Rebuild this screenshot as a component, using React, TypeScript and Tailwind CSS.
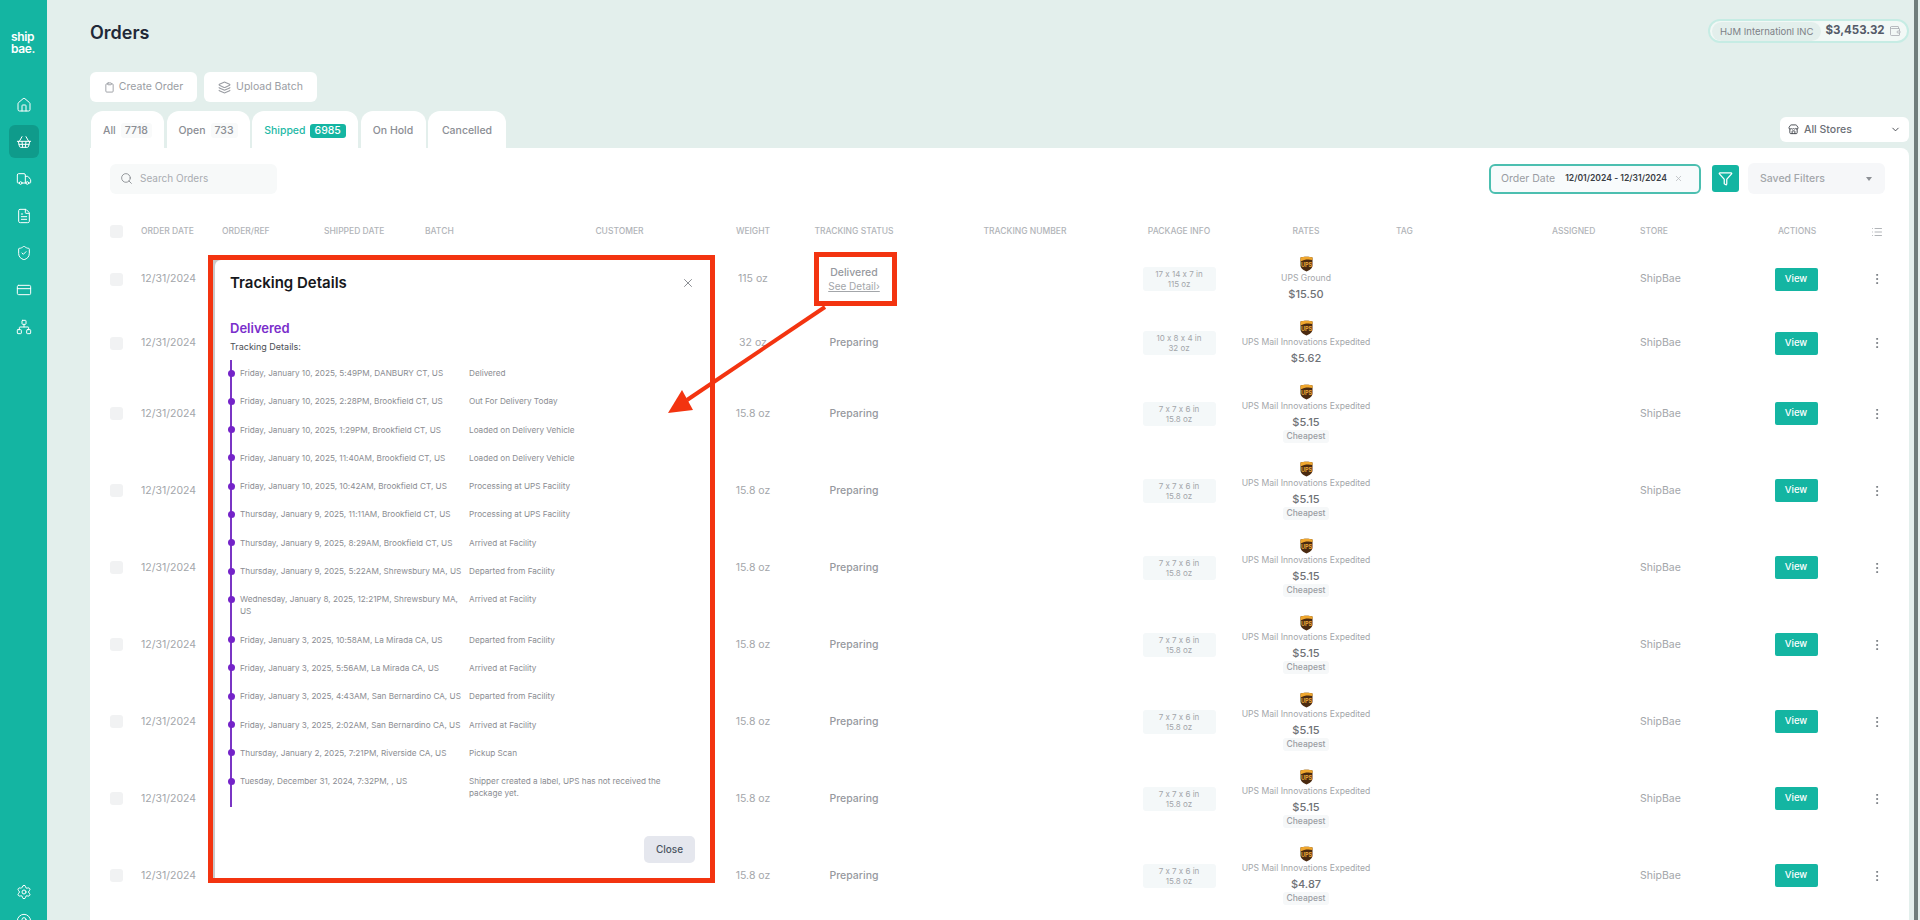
import { ChevronDown, CreditCard, FileText, Filter, Home, Layers, List, MoreVertical, Network, Search, Settings, ShieldCheck, ShoppingBasket, Store, Truck, Wallet, X, Clipboard, CircleUser } from "lucide-react"

const gridCols =
  "grid grid-cols-[31px_81px_102px_101px_101px_187px_80px_122px_220px_88px_166px_163px_88px_100px_114px_46px] items-center"

const navIcons = [Home, ShoppingBasket, Truck, FileText, ShieldCheck, CreditCard, Network]

const rows = [
  { weight: "115 oz", status: "Delivered", size: "17 x 14 x 7 in", service: "UPS Ground", price: "$15.50", cheapest: false },
  { weight: "32 oz", status: "Preparing", size: "10 x 8 x 4 in", service: "UPS Mail Innovations Expedited", price: "$5.62", cheapest: false },
  { weight: "15.8 oz", status: "Preparing", size: "7 x 7 x 6 in", service: "UPS Mail Innovations Expedited", price: "$5.15", cheapest: true },
  { weight: "15.8 oz", status: "Preparing", size: "7 x 7 x 6 in", service: "UPS Mail Innovations Expedited", price: "$5.15", cheapest: true },
  { weight: "15.8 oz", status: "Preparing", size: "7 x 7 x 6 in", service: "UPS Mail Innovations Expedited", price: "$5.15", cheapest: true },
  { weight: "15.8 oz", status: "Preparing", size: "7 x 7 x 6 in", service: "UPS Mail Innovations Expedited", price: "$5.15", cheapest: true },
  { weight: "15.8 oz", status: "Preparing", size: "7 x 7 x 6 in", service: "UPS Mail Innovations Expedited", price: "$5.15", cheapest: true },
  { weight: "15.8 oz", status: "Preparing", size: "7 x 7 x 6 in", service: "UPS Mail Innovations Expedited", price: "$5.15", cheapest: true },
  { weight: "15.8 oz", status: "Preparing", size: "7 x 7 x 6 in", service: "UPS Mail Innovations Expedited", price: "$4.87", cheapest: true },
]

const events = [
  ["Friday, January 10, 2025, 5:49PM, DANBURY CT, US", "Delivered"],
  ["Friday, January 10, 2025, 2:28PM, Brookfield CT, US", "Out For Delivery Today"],
  ["Friday, January 10, 2025, 1:29PM, Brookfield CT, US", "Loaded on Delivery Vehicle"],
  ["Friday, January 10, 2025, 11:40AM, Brookfield CT, US", "Loaded on Delivery Vehicle"],
  ["Friday, January 10, 2025, 10:42AM, Brookfield CT, US", "Processing at UPS Facility"],
  ["Thursday, January 9, 2025, 11:11AM, Brookfield CT, US", "Processing at UPS Facility"],
  ["Thursday, January 9, 2025, 8:29AM, Brookfield CT, US", "Arrived at Facility"],
  ["Thursday, January 9, 2025, 5:22AM, Shrewsbury MA, US", "Departed from Facility"],
  ["Wednesday, January 8, 2025, 12:21PM, Shrewsbury MA, US", "Arrived at Facility"],
  ["Friday, January 3, 2025, 10:58AM, La Mirada CA, US", "Departed from Facility"],
  ["Friday, January 3, 2025, 5:56AM, La Mirada CA, US", "Arrived at Facility"],
  ["Friday, January 3, 2025, 4:43AM, San Bernardino CA, US", "Departed from Facility"],
  ["Friday, January 3, 2025, 2:02AM, San Bernardino CA, US", "Arrived at Facility"],
  ["Thursday, January 2, 2025, 7:21PM, Riverside CA, US", "Pickup Scan"],
  ["Tuesday, December 31, 2024, 7:32PM, , US", "Shipper created a label, UPS has not received the package yet."],
]

function UpsLogo() {
  return (
    <svg width="13" height="16" viewBox="0 0 13 16" className="shrink-0">
      <path d="M0.5 1.6C3 0.5 10 0.5 12.5 1.6V9.5C12.5 12.6 9 14.4 6.5 15.5C4 14.4 0.5 12.6 0.5 9.5Z" fill="#4a2a10" />
      <path d="M0.5 1.6C3 0.5 10 0.5 12.5 1.6V4C9 3 4 3.2 0.5 5.5Z" fill="#f0a72e" />
      <text x="6.5" y="10.5" textAnchor="middle" fontSize="5.5" fontWeight="700" fill="#e9a73a" fontFamily="Inter, sans-serif">UPS</text>
    </svg>
  )
}

function Sidebar() {
  return (
    <aside className="w-[47px] shrink-0 bg-[#14b5a2] flex flex-col items-center text-white">
      <div className="mt-[31px] w-[25px] text-[12px] leading-[12px] font-semibold tracking-[-0.4px]">
        ship
        <br />
        bae.
      </div>
      <div className="mt-[31px] flex flex-col items-center">
        {navIcons.map((Icon, i) => (
          <div key={i} className="h-[37px] flex items-center justify-center">
            <div className={`w-[30px] h-[33px] flex items-center justify-center rounded-md ${i === 1 ? "bg-[#0f9b8b]" : ""}`}>
              <Icon size={16} strokeWidth={1.5} />
            </div>
          </div>
        ))}
      </div>
      <div className="mt-auto flex flex-col items-center gap-[13px] -mb-[9px]">
        <Settings size={16} strokeWidth={1.5} />
        <CircleUser size={16} strokeWidth={1.5} />
      </div>
    </aside>
  )
}

function Tab({ label, count, active, width }: { label: string; count?: string; active?: boolean; width: string }) {
  return (
    <div
      className={`${width} h-[37px] pt-[2px] rounded-t-xl bg-white flex items-center justify-center gap-[4px] text-[10.5px] font-medium ${
        active ? "text-[#1fb9a6]" : "text-[#8b8e94]"
      }`}
    >
      <span>{label}</span>
      {count && (
        <span
          className={
            active
              ? "h-[14px] px-[5px] rounded-[3px] bg-[#14b5a2] text-white flex items-center"
              : "ml-[1px] px-[4px] rounded-[3px] bg-[#f9fafa]"
          }
        >
          {count}
        </span>
      )}
    </div>
  )
}

function OrderRow({ row }: { row: (typeof rows)[number] }) {
  return (
    <div className={`${gridCols} py-[9px] text-[#a3a6aa] text-[10.5px]`}>
      <div className="w-[13px] h-[13px] rounded-[3px] bg-[#f1f2f3]" />
      <div>12/31/2024</div>
      <div />
      <div />
      <div />
      <div />
      <div className="text-center">{row.weight}</div>
      <div className="text-center font-medium text-[#96999e]">
        {row.status}
        {row.status === "Delivered" && (
          <div className="text-[10px] leading-[13px] font-normal underline text-[#a3a6aa]">See Detail›</div>
        )}
      </div>
      <div />
      <div className="flex justify-center">
        <div className="w-[73px] h-[24px] rounded-[3px] bg-[#f4f8f9] text-[8px] leading-[10px] text-center flex flex-col justify-center">
          <span>{row.size}</span>
          <span>{row.weight}</span>
        </div>
      </div>
      <div className="flex flex-col items-center">
        <UpsLogo />
        <div className="text-[8.6px] leading-[12px] whitespace-nowrap">{row.service}</div>
        <div className="mt-[2px] text-[11px] leading-[16px] font-medium text-[#6e7176]">{row.price}</div>
        {row.cheapest && (
          <div className="h-[13px] px-[4px] rounded-[3px] bg-[#f6f8f9] text-[8.5px] leading-[13px] font-medium text-[#9a9da3]">
            Cheapest
          </div>
        )}
      </div>
      <div />
      <div />
      <div>ShipBae</div>
      <div className="flex justify-center pr-[2px]">
        <button className="w-[43px] h-[23px] rounded-[2px] bg-[#14b5a2] text-white text-[9.5px] font-medium">View</button>
      </div>
      <div className="flex justify-center">
        <MoreVertical size={14} strokeWidth={1.5} className="text-[#6b7076]" />
      </div>
    </div>
  )
}

function TrackingModal() {
  return (
    <div className="absolute left-[208px] top-[255px] w-[507px] h-[628px] border-[5px] border-[#f33410] bg-[#c9c9c9] pl-[2px]">
      <div className="h-full rounded-tl-md bg-white pl-[15px] pr-[15px] pt-[8px]">
        <div className="flex items-center justify-between h-[30px]">
          <h2 className="text-[15px] font-semibold text-[#16181c]">Tracking Details</h2>
          <X size={14} strokeWidth={1.5} className="text-[#7b7f85]" />
        </div>
        <div className="mt-[22px] text-[13px] leading-[16px] font-semibold text-[#7a2ecb]">Delivered</div>
        <div className="mt-[4px] text-[9px] leading-[14px] text-[#4c4f55]">Tracking Details:</div>
        <div className="relative mt-[6px]">
          <div className="absolute left-0 top-0 bottom-0 w-[2px] bg-[#7a35c4]" />
          <ul className="pt-[7px] pb-[8px]">
            {events.map(([place, status], i) => (
              <li
                key={i}
                className={`relative grid grid-cols-[224px_226px] gap-x-[5px] pl-[10px] text-[8.2px] leading-[12px] text-[#8b8d92] ${
                  i === events.length - 1 ? "" : "pb-[16.3px]"
                }`}
              >
                <span className="absolute -left-[2.5px] top-[2.5px] w-[7px] h-[7px] rounded-full bg-[#7423c9]" />
                <span>{place}</span>
                <span>{status}</span>
              </li>
            ))}
          </ul>
        </div>
        <div className="mt-[29px] flex justify-end">
          <button className="w-[51px] h-[27px] rounded-[5px] bg-[#e5e7ee] text-[10px] font-medium text-[#4b5563]">Close</button>
        </div>
      </div>
    </div>
  )
}

export default function App() {
  return (
    <div className="relative flex h-[920px] overflow-hidden bg-[#e3efec] font-[Inter,sans-serif] [font-feature-settings:'calt'_0]">
      <Sidebar />
      <main className="flex-1 min-w-0 pl-[43px] pr-[11px] pt-[19px]">
        <div className="flex items-start justify-between">
          <h1 className="text-[18px] leading-[28px] font-semibold text-[#1f2937]">Orders</h1>
          <div className="w-[201px] h-[24px] rounded-full border-2 border-[#c6ece4] bg-[#f2f8f6] flex items-center pl-[2px] pr-[6px]">
            <div className="h-[19px] px-[8px] rounded-full bg-[#e3efec] text-[9.5px] leading-[19px] text-[#7d8187] whitespace-nowrap">
              HJM Internationl INC
            </div>
            <div className="ml-[4px] text-[11.5px] font-bold text-[#555a68]">$3,453.32</div>
            <Wallet size={12} strokeWidth={1.5} className="ml-auto text-[#a4a7ad]" />
          </div>
        </div>

        <div className="mt-[25px] flex gap-[7px]">
          <button className="w-[107px] h-[30px] rounded-md bg-white flex items-center justify-center gap-[4px] text-[10.5px] text-[#9a9da3]">
            <Clipboard size={11} /> Create Order
          </button>
          <button className="w-[113px] h-[30px] rounded-md bg-white flex items-center justify-center gap-[5px] text-[10.5px] text-[#9a9da3]">
            <Layers size={13} /> Upload Batch
          </button>
        </div>

        <div className="mt-[9px] flex items-start justify-between">
          <div className="flex gap-[2.5px] pl-[1px]">
            <Tab label="All" count="7718" width="w-[73px]" />
            <Tab label="Open" count="733" width="w-[83px]" />
            <Tab label="Shipped" count="6985" active width="w-[106px]" />
            <Tab label="On Hold" width="w-[65px]" />
            <Tab label="Cancelled" width="w-[78px]" />
          </div>
          <div className="mt-[6px] w-[129px] h-[25px] rounded-md bg-white flex items-center pl-[8px] pr-[8px] text-[10.5px] font-medium text-[#6b6f76]">
            <Store size={11} className="mr-[5px] text-[#3f4349]" />
            All Stores
            <ChevronDown size={11} className="ml-auto text-[#3f4349]" />
          </div>
        </div>

        <section className="h-[780px] rounded-tr-lg bg-white pl-[20px] pr-[9px] pt-[15px]">
          <div className="flex items-center justify-between h-[31px] pr-[15px]">
            <div className="w-[167px] h-[30px] rounded-md bg-[#f7f9f9] flex items-center pl-[10px] gap-[7px] text-[10px] text-[#a9acb1]">
              <Search size={13} strokeWidth={1.5} className="text-[#7f8388]" />
              Search Orders
            </div>
            <div className="flex items-center">
              <div className="w-[212px] h-[30px] rounded-md border-2 border-[#4cbfb0] bg-[#f8fbfc] flex items-center pl-[10px] text-[10.5px] text-[#9a9da3] whitespace-nowrap">
                Order Date
                <span className="ml-[10px] text-[8.6px] font-semibold text-[#3a3d44]">12/01/2024 - 12/31/2024</span>
                <X size={9} className="ml-auto mr-[16px] text-[#b5b8bc]" />
              </div>
              <div className="ml-[11px] w-[27px] h-[27px] rounded-[3px] bg-[#14b5a2] flex items-center justify-center text-white">
                <Filter size={15} strokeWidth={2} />
              </div>
              <div className="ml-[9px] w-[137px] h-[31px] rounded-md bg-[#f6f7f9] flex items-center pl-[12px] pr-[13px] text-[10.5px] font-medium text-[#a3a6aa]">
                Saved Filters
                <span className="ml-auto w-0 h-0 border-x-[3.5px] border-x-transparent border-t-[4px] border-t-[#8d9095]" />
              </div>
            </div>
          </div>

          <div className={`${gridCols} mt-[22px] h-[31px] text-[8.5px] font-medium text-[#b1b4b8]`}>
            <div className="w-[13px] h-[13px] rounded-[3px] bg-[#f1f2f3]" />
            <div>ORDER DATE</div>
            <div>ORDER/REF</div>
            <div>SHIPPED DATE</div>
            <div>BATCH</div>
            <div className="text-center">CUSTOMER</div>
            <div className="text-center">WEIGHT</div>
            <div className="text-center">TRACKING STATUS</div>
            <div className="text-center">TRACKING NUMBER</div>
            <div className="text-center">PACKAGE INFO</div>
            <div className="text-center">RATES</div>
            <div className="pl-[7px]">TAG</div>
            <div>ASSIGNED</div>
            <div>STORE</div>
            <div className="text-center">ACTIONS</div>
            <div className="flex justify-center">
              <List size={12} />
            </div>
          </div>

          {rows.map((row, i) => (
            <OrderRow key={i} row={row} />
          ))}
        </section>
      </main>

      <TrackingModal />

      {/* annotation around the tracking status cell */}
      <div className="absolute left-[814px] top-[252px] w-[83px] h-[54px] border-[5px] border-[#f33410]" />
      <svg className="absolute left-[660px] top-[300px]" width="170" height="120" viewBox="0 0 170 120">
        <line x1="165" y1="7" x2="27" y2="100" stroke="#f33410" strokeWidth="4" />
        <polygon points="8,113 22,90 33,110" fill="#f33410" />
      </svg>

      <div className="absolute right-[2px] top-0 bottom-0 w-[4px] bg-[#6f7d7b]" />
    </div>
  )
}
